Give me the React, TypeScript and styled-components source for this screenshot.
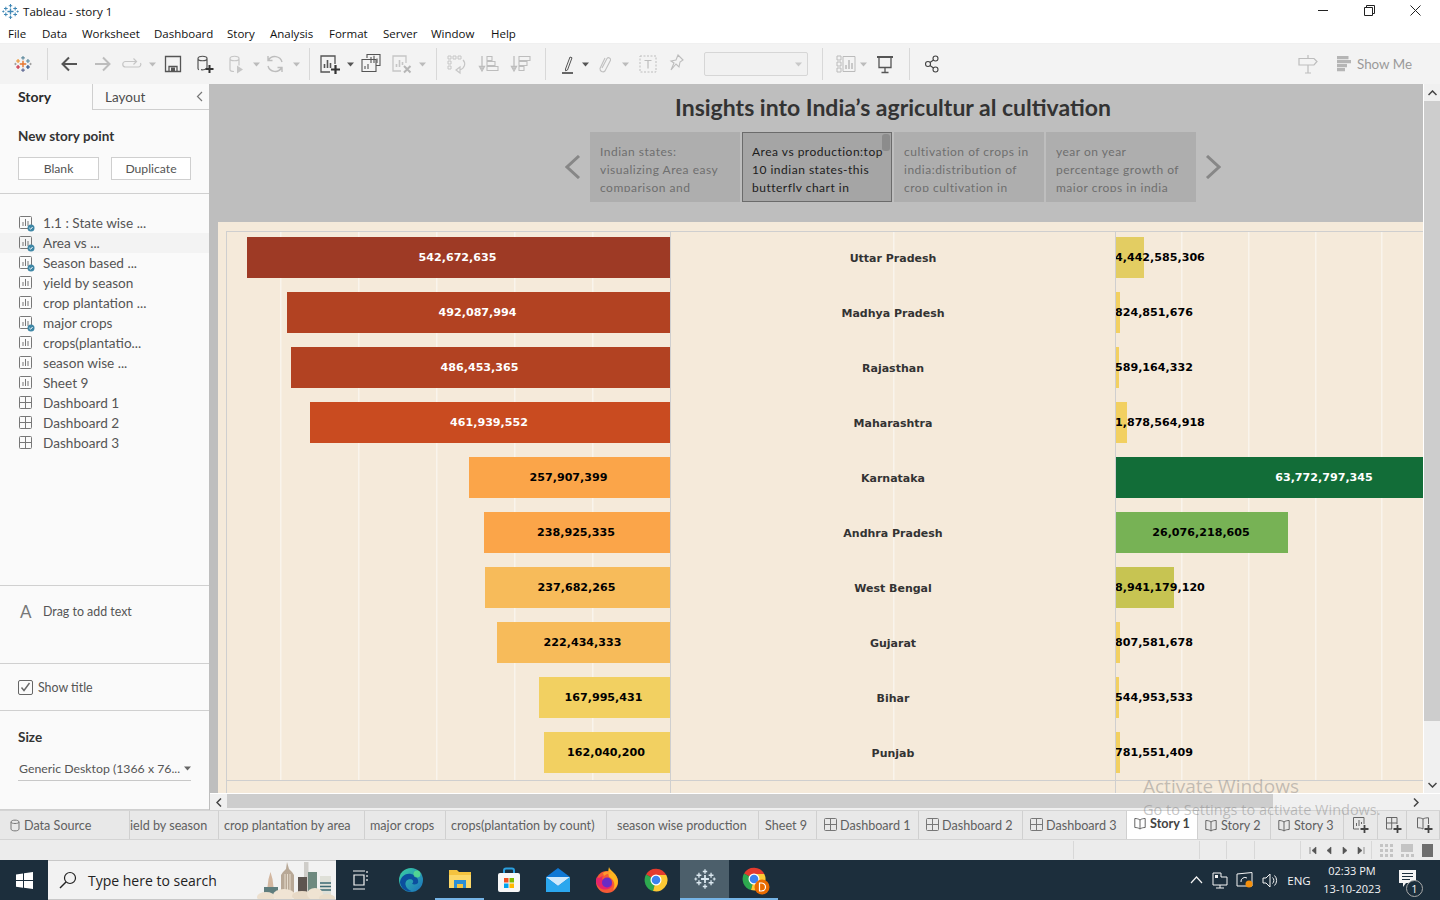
import React from "react";
import styled, { createGlobalStyle } from "styled-components";

const Global = createGlobalStyle`
  html, body { margin: 0; padding: 0; height: 100%; overflow: hidden; background: #fff; }
  #root { height: 900px; width: 1440px; }
  * { box-sizing: border-box; }
`;

const UI = `"Lato", "Open Sans", "Liberation Sans", sans-serif`;
const SEGOE = `"Open Sans", "Noto Sans", "Liberation Sans", sans-serif`;
const VIZ = `"DejaVu Sans", "Liberation Sans", sans-serif`;

const Shell = styled.div`
  position: relative;
  width: 1440px;
  height: 900px;
  display: flex;
  flex-direction: column;
  overflow: hidden;
  font-family: ${UI};
`;
const TitleBar = styled.div`
  height: 22px;
  display: flex;
  align-items: center;
  padding: 0 2px 0 2px;
  gap: 4px;
  background: #fff;
  font: 11.6px ${SEGOE};
  color: #111;
`;
const TitleText = styled.span`
  flex: 1;
`;
const WinBtns = styled.div`
  display: flex;
  gap: 0;
  align-self: flex-start;
`;
const WinBtn = styled.div`
  width: 46px;
  height: 20px;
  display: flex;
  align-items: center;
  justify-content: center;
`;
const MenuBar = styled.div`
  height: 21px;
  display: flex;
  align-items: center;
  padding: 1px 0 0 8px;
  background: #fff;
  font: 11.5px ${SEGOE};
  color: #111;
`;
const MenuItem = styled.span<{ $w: number }>`
  width: ${(p) => p.$w}px;
`;
const Toolbar = styled.div`
  height: 41px;
  display: flex;
  align-items: center;
  background: #f3f3f3;
  border-top: 1px solid #f0f0f0;
`;
const ToolSlot = styled.div<{ $ml: number; $w: number }>`
  margin-left: ${(p) => p.$ml}px;
  width: ${(p) => p.$w}px;
  height: 22px;
  flex: none;
  display: flex;
  align-items: center;
  justify-content: center;
`;
const ToolSep = styled.div<{ $ml: number }>`
  margin-left: ${(p) => p.$ml}px;
  width: 1px;
  height: 32px;
  flex: none;
  background: #d8d8d8;
`;
const Combo = styled.div<{ $ml: number }>`
  margin-left: ${(p) => p.$ml}px;
  width: 104px;
  height: 24px;
  flex: none;
  border: 1px solid #d6d6d6;
  border-radius: 2px;
  background: #f1f1f1;
  display: flex;
  align-items: center;
  justify-content: flex-end;
  padding-right: 5px;
`;
const ShowMe = styled.span<{ $ml: number }>`
  margin-left: ${(p) => p.$ml}px;
  font: 13.4px ${UI};
  color: #9a9a9a;
  flex: none;
`;
const Body = styled.div`
  height: 726px;
  display: flex;
`;
const Side = styled.aside`
  width: 210px;
  flex: none;
  display: flex;
  flex-direction: column;
  background: #fafafa;
  border-right: 1px solid #bebebe;
  color: #4d4d4d;
  font-size: 13px;
`;
const SideTabs = styled.div`
  height: 26px;
  flex: none;
  display: flex;
`;
const SideTab = styled.div<{ $on?: boolean; $w: number }>`
  width: ${(p) => p.$w}px;
  padding-left: ${(p) => (p.$on ? 18 : 12)}px;
  padding-bottom: ${(p) => (p.$on ? 2 : 0)}px;
  display: flex;
  align-items: center;
  justify-content: space-between;
  padding-right: 6px;
  font: ${(p) => (p.$on ? 700 : 400)} ${(p) => (p.$on ? 14 : 13.5)}px ${UI};
  color: ${(p) => (p.$on ? "#2b2b2b" : "#4d4d4d")};
  border-bottom: ${(p) => (p.$on ? "none" : "1px solid #cfcfcf")};
  border-left: ${(p) => (p.$on ? "none" : "1px solid #cfcfcf")};
  background: ${(p) => (p.$on ? "#fafafa" : "#f9f9f9")};
`;
const SideSection = styled.section<{ $h: number }>`
  height: ${(p) => p.$h}px;
  flex: none;
  border-bottom: 1px solid #d0d0d0;
`;
const NewPoint = styled(SideSection)`
  padding: 18px 18px 0;
`;
const SideHeading = styled.div`
  font: 700 13.5px ${UI};
  color: #333;
  line-height: 16px;
`;
const SideButtons = styled.div`
  display: flex;
  gap: 12px;
  margin-top: 13px;
`;
const SideButton = styled.div<{ $w: number }>`
  width: ${(p) => p.$w}px;
  height: 23px;
  padding-bottom: 1px;
  border: 1px solid #cfcfcf;
  background: #fff;
  display: flex;
  align-items: center;
  justify-content: center;
  font: 12.2px ${UI};
  color: #555;
`;
const SheetList = styled(SideSection)`
  padding-top: 19px;
`;
const SheetRow = styled.div<{ $on?: boolean }>`
  height: 20px;
  display: flex;
  align-items: center;
  gap: 10px;
  padding-left: 19px;
  background: ${(p) => (p.$on ? "#f3f3f3" : "transparent")};
  font: 13.6px ${UI};
  color: #555;
  white-space: nowrap;
`;
const DragRow = styled(SideSection)`
  display: flex;
  align-items: flex-start;
  padding: 17px 0 0 20px;
  font: 12.4px ${UI};
  color: #555;
`;
const DragGlyph = styled.span`
  width: 23px;
  font: 17px ${UI};
  line-height: 18px;
  color: #777;
`;
const DragText = styled.span`
  line-height: 18px;
`;
const ShowTitle = styled(SideSection)`
  display: flex;
  align-items: center;
  gap: 5px;
  padding-left: 18px;
  font: 12.4px ${UI};
  color: #555;
`;
const Check = styled.span`
  width: 15px;
  height: 15px;
  border: 1px solid #666;
  border-radius: 2px;
  display: flex;
  align-items: center;
  justify-content: center;
`;
const SizeBox = styled.section`
  flex: 1;
  padding: 18px 18px 0;
  border-bottom: 1px solid #d0d0d0;
`;
const SizeSelect = styled.div`
  margin-top: 14px;
  height: 22px;
  width: 173px;
  border-bottom: 1px solid #c8c8c8;
  display: flex;
  align-items: center;
  justify-content: space-between;
  padding: 0 0 3px 1px;
  font: 12.3px ${UI};
  color: #555;
  white-space: nowrap;
`;
const Main = styled.main`
  flex: 1;
  min-width: 0;
  display: flex;
  flex-direction: column;
`;
const ViewRow = styled.div`
  flex: 1;
  min-height: 0;
  display: flex;
`;
const Canvas = styled.div`
  width: 1213px;
  flex: none;
  overflow: hidden;
  background: #bebebe;
`;
const StoryPage = styled.div`
  width: 1366px;
  height: 100%;
  display: flex;
  flex-direction: column;
`;
const StoryTitle = styled.h1`
  margin: 0;
  height: 48px;
  padding-bottom: 2px;
  display: flex;
  align-items: center;
  justify-content: center;
  font: 700 23px ${UI};
  color: #333;
`;
const Nav = styled.div`
  height: 70px;
  display: flex;
  justify-content: center;
  align-items: center;
  gap: 2px;
`;
const NavArrow = styled.div<{ $right?: boolean }>`
  width: 23px;
  display: flex;
  justify-content: ${(p) => (p.$right ? "flex-end" : "flex-start")};
`;
const Caption = styled.div<{ $on?: boolean }>`
  position: relative;
  width: 150px;
  height: 70px;
  padding: ${(p) => (p.$on ? "10px 6px 0 9px" : "11px 6px 0 10px")};
  background: ${(p) => (p.$on ? "#a5a5a5" : "#aeaeae")};
  border: ${(p) => (p.$on ? "1px solid #6b6b6b" : "none")};
  color: ${(p) => (p.$on ? "#1c1c1c" : "#6e6e6e")};
  font: 12px/18px ${UI};
`;
const CaptionClip = styled.div`
  height: 49px;
  overflow: hidden;
  letter-spacing: 0.5px;
`;
const CaptionThumb = styled.span`
  position: absolute;
  right: 1px;
  top: 1px;
  width: 8px;
  height: 17px;
  border-radius: 3px;
  background: #8c8c8c;
`;
const Board = styled.div`
  flex: 1;
  min-height: 0;
  margin-top: 20px;
  margin-left: 8px;
  padding: 9px 0 0 8px;
  background: #f5eada;
  width: 1350px;
`;
const Plot = styled.div`
  height: 100%;
  display: grid;
  grid-template-columns: 444px 445px 1fr;
  border-top: 1px solid #cfcfcf;
  border-left: 1px solid #cfcfcf;
`;
const Pane = styled.div<{ $lines: string }>`
  display: flex;
  flex-direction: column;
  background: ${(p) => p.$lines};
  border-right: 1px solid #cfcfcf;
  min-width: 0;
`;
const Rows = styled.div`
  flex: 1;
  display: flex;
  flex-direction: column;
  gap: 14px;
  padding-top: 5px;
  overflow: hidden;
`;
const Foot = styled.div`
  height: 13px;
  flex: none;
  background: #f5eada;
  border-top: 1px solid #cfcfcf;
`;
const LeftRow = styled.div`
  height: 41px;
  flex: none;
  display: flex;
  justify-content: flex-end;
`;
const Bar = styled.div<{ $bg: string; $w: number; $ink: string }>`
  width: ${(p) => p.$w}px;
  flex: none;
  height: 41px;
  padding-right: 2px;
  background: ${(p) => p.$bg};
  color: ${(p) => p.$ink};
  display: flex;
  align-items: center;
  justify-content: center;
  font: 700 11.1px ${VIZ};
`;
const StateRow = styled.div`
  height: 41px;
  flex: none;
  display: flex;
  align-items: center;
  justify-content: center;
  padding-top: 2px;
  font: 700 11px ${VIZ};
  color: #333;
`;
const RightRow = styled.div`
  position: relative;
  height: 41px;
  flex: none;
  display: flex;
`;
const RightValue = styled.span`
  position: absolute;
  left: -1px;
  top: 0;
  height: 41px;
  display: flex;
  align-items: center;
  font: 700 11.1px ${VIZ};
  color: #000;
`;
const VScroll = styled.div`
  width: 17px;
  flex: none;
  background: #f0f0f0;
  display: flex;
  flex-direction: column;
  align-items: center;
  border-left: 1px solid #fff;
`;
const ScrollEnd = styled.div`
  height: 17px;
  flex: none;
  display: flex;
  align-items: center;
  justify-content: center;
`;
const VThumb = styled.div`
  width: 16px;
  height: 620px;
  background: #cdcdcd;
`;
const VTrack = styled.div`
  flex: 1;
`;
const HScroll = styled.div`
  height: 17px;
  flex: none;
  display: flex;
  background: #f0f0f0;
  border-top: 1px solid #fff;
`;
const HThumb = styled.div`
  width: 1046px;
  margin-bottom: 2px;
  background: #cdcdcd;
`;
const HTrack = styled.div`
  flex: 1;
`;
const HEnd = styled.div`
  width: 17px;
  display: flex;
  align-items: center;
  justify-content: center;
`;
const HCorner = styled.div`
  width: 16px;
  background: #f0f0f0;
`;
const Tabs = styled.div`
  height: 30px;
  display: flex;
  background: #e8e8e8;
  border-bottom: 1px solid #d4d4d4;
  border-top: 1px solid #d4d4d4;
  font: 12.6px ${UI};
  color: #606060;
`;
const Tab = styled.div<{ $w: number; $on?: boolean; $p: number }>`
  width: ${(p) => p.$w}px;
  flex: none;
  display: flex;
  align-items: center;
  gap: 4px;
  padding-left: ${(p) => p.$p}px;
  padding-bottom: ${(p) => (p.$on ? 3 : 0)}px;
  border-right: 1px solid #d0d0d0;
  background: ${(p) => (p.$on ? "#fff" : "transparent")};
  font-weight: ${(p) => (p.$on ? 700 : 400)};
  color: ${(p) => (p.$on ? "#444" : "#606060")};
  white-space: nowrap;
  overflow: hidden;
`;
const TabDash = styled.span`
  display: flex;
  margin-right: -2px;
`;
const Status = styled.div`
  height: 20px;
  display: flex;
  align-items: center;
  background: #ececec;
`;
const StatusCell = styled.div<{ $w: number }>`
  width: ${(p) => p.$w}px;
  height: 18px;
  flex: none;
  border-right: 1px solid #d8d8d8;
`;
const Pager = styled.div`
  display: flex;
  align-items: center;
  gap: 6px;
  padding-left: 7px;
  width: 71px;
  height: 18px;
  border-right: 1px solid #d8d8d8;
`;
const ViewIcons = styled.div`
  display: flex;
  align-items: center;
  gap: 7px;
  padding-left: 8px;
`;
const Taskbar = styled.div`
  height: 40px;
  display: flex;
  align-items: center;
  background: #1c2e3c;
  color: #f4f4f4;
`;
const StartBtn = styled.div`
  width: 48px;
  height: 40px;
  flex: none;
  display: flex;
  align-items: center;
  justify-content: center;
`;
const SearchBox = styled.div`
  position: relative;
  width: 288px;
  height: 40px;
  flex: none;
  background: #f2f2f2;
  border: 1px solid #c8c8c8;
  border-width: 1px 0 1px 0;
  display: flex;
  align-items: center;
  gap: 11px;
  padding-left: 11px;
  font: 14px ${SEGOE};
  color: #222;
`;
const Skyline = styled.div`
  position: absolute;
  right: 0;
  bottom: 0;
  display: flex;
`;
const TaskIcon = styled.div<{ $active?: boolean; $under?: boolean; $w?: number }>`
  position: relative;
  width: ${(p) => p.$w ?? 49}px;
  height: 40px;
  flex: none;
  display: flex;
  align-items: center;
  justify-content: center;
  background: ${(p) => (p.$active ? "#4c5f6b" : "transparent")};
  border-bottom: ${(p) => (p.$under ? "2px solid #75b4e6" : "none")};
`;
const TrayArea = styled.div`
  margin-left: auto;
  padding-right: 17px;
  display: flex;
  align-items: center;
  height: 40px;
`;
const TrayIcon = styled.div<{ $w: number }>`
  width: ${(p) => p.$w}px;
  display: flex;
  align-items: center;
  justify-content: center;
`;
const TrayLang = styled.span`
  width: 28px;
  text-align: center;
  font: 11.5px ${SEGOE};
`;
const Clock = styled.div`
  width: 78px;
  text-align: center;
  font: 11px/18px ${SEGOE};
`;
const Notify = styled.div`
  position: relative;
  width: 32px;
  margin-top: -4px;
  display: flex;
  align-items: center;
  justify-content: center;
`;
const NotifyBadge = styled.span`
  position: absolute;
  right: 0;
  bottom: -10px;
  width: 17px;
  height: 17px;
  border-radius: 50%;
  border: 1px solid #aaa;
  background: #1c2e3c;
  font: 11px/15px ${SEGOE};
  text-align: center;
`;
const Watermark = styled.div`
  position: absolute;
  left: 1143px;
  top: 774px;
  color: rgba(120, 120, 120, 0.42);
  font-family: ${SEGOE};
  pointer-events: none;
  white-space: nowrap;
`;
const WatermarkBig = styled.div`
  font-size: 19px;
  line-height: 25px;
`;
const WatermarkSmall = styled.div`
  font-size: 14.5px;
  line-height: 20px;
  margin-top: 1px;
`;

/* ---------- icons ---------- */
const S = (c: string, w = 1.3) => ({ fill: "none", stroke: c, strokeWidth: w });

const TableauMark = ({ size = 20, mono }: { size?: number; mono?: string }) => {
  const col = (c: string) => mono || c;
  const P = ({ x, y, r, c, w }: { x: number; y: number; r: number; c: string; w: number }) => (
    <path d={`M${x - r} ${y}H${x + r}M${x} ${y - r}V${y + r}`} stroke={col(c)} strokeWidth={w} fill="none" />
  );
  return (
    <svg width={size} height={size} viewBox="0 0 20 20">
      <P x={10} y={10} r={3.6} c="#e8762d" w={1.6} />
      <P x={10} y={3.2} r={2} c="#5b879b" w={1.2} />
      <P x={10} y={16.8} r={2} c="#5c6692" w={1.2} />
      <P x={4.5} y={6.6} r={2.2} c="#eb912b" w={1.2} />
      <P x={15.5} y={6.6} r={2.2} c="#59879b" w={1.2} />
      <P x={4.5} y={13.4} r={2.2} c="#c72037" w={1.2} />
      <P x={15.5} y={13.4} r={2.2} c="#1f447e" w={1.2} />
      <P x={1.6} y={10} r={1.3} c="#9a9a9a" w={1} />
      <P x={18.4} y={10} r={1.3} c="#9a9a9a" w={1} />
    </svg>
  );
};

const Caret = ({ c = "#bbb" }: { c?: string }) => (
  <svg width="7" height="5" viewBox="0 0 7 5"><path d="M0 0.5h7L3.5 4.5z" fill={c} /></svg>
);

const DARK = "#555";
const DIM = "#c6c6c6";
const Ic = ({ children }: { children: React.ReactNode }) => (
  <svg width="22" height="22" viewBox="0 0 22 22">{children}</svg>
);

const toolIcons: Record<string, React.ReactNode> = {
  logo: <TableauMark size={18} />,
  back: <Ic><path d="M18 11H4M10 4.5 3.5 11l6.5 6.5" {...S(DARK, 2)} /></Ic>,
  fwd: <Ic><path d="M4 11h14M12 4.5l6.500 6.500-6.500 6.500" {...S("#bdbdbd", 2)} /></Ic>,
  redo: <Ic><path d="M15 8.500H4.500a2.700 2.700 0 0 0 0 5.500H17a2.700 2.700 0 0 0 2.500-4M12.500 5.500l3 3-3 3" {...S("#c6c6c6", 1.2)} /></Ic>,
  save: <Ic><path d="M3.500 3.500h15v15h-15zM7 18.500v-5h8v5" {...S(DARK, 1.3)} /><rect x="9" y="14.500" width="4" height="4" fill={DARK} /></Ic>,
  newData: (
    <Ic>
      <path d="M4 5.500c0-3 9-3 9 0v9c0 2-4 2.500-6 2.200M4 5.500v10c0 .6.4 1 1 1.200M4 5.500c0 3 9 3 9 0" {...S(DARK, 1.2)} />
      <path d="M15.500 12v8M11.500 16h8" {...S("#333", 2)} />
    </Ic>
  ),
  pause: (
    <Ic>
      <path d="M5 5.500c0-3 9-3 9 0v7M5 5.500v11c0 1.400 2.400 2 4 2M5 5.500c0 3 9 3 9 0" {...S(DIM, 1.2)} />
      <path d="M12 12.500l6 4-6 4z" fill={DIM} />
    </Ic>
  ),
  refresh: <Ic><path d="M18 9a7.500 7.500 0 0 0-13.500-2M4 13a7.500 7.500 0 0 0 13.500 2M4 3v4.500h4.500M18 19v-4.500h-4.500" {...S("#bdbdbd", 1.4)} /></Ic>,
  newSheet: (
    <Ic>
      <path d="M16 11V3H2v16h9" {...S(DARK, 1.3)} />
      <path d="M5.500 15v-4M8.500 15V7M11.500 15v-5" {...S(DARK, 1.6)} />
      <path d="M16.500 12v9M12 16.500h9" {...S("#333", 2.2)} />
    </Ic>
  ),
  dup: (
    <Ic>
      <path d="M7 5V1.500h13v11h-4" {...S(DARK, 1.1)} />
      <path d="M2 6.500h14v12H2z" fill="#f3f3f3" stroke={DARK} strokeWidth="1.100" />
      <path d="M11 10V4M14 10V2.800M17 10V5.500M5 16v-3M8 16v-5" {...S(DARK, 1.1)} />
    </Ic>
  ),
  clear: (
    <Ic>
      <path d="M15 10V3H2v15h8" {...S(DIM, 1.3)} />
      <path d="M5.500 14v-3M8.500 14V7M11.500 12V9" {...S(DIM, 1.6)} />
      <path d="M13 13l6.500 6.500M19.500 13L13 19.500" {...S("#b6b6b6", 2)} />
    </Ic>
  ),
  swap: (
    <Ic>
      <path d="M2 3h3v3H2zM7 3h3v3H7zM12 3h3v3h-3zM2 8h3v3H2zM2 13h3v3H2z" {...S(DIM, 1)} />
      <path d="M17 7c3 3 2 8-3 10M10 17l4-3v6z" {...S(DIM, 1.2)} />
    </Ic>
  ),
  sortA: (
    <Ic>
      <path d="M4 3v13M1.500 13.500 4 18l2.500-4.500z" {...S("#bdbdbd", 1.3)} />
      <path d="M9 3.500h5v4H9zM9 8.500h8v4H9zM9 13.500h11v4H9z" {...S("#bdbdbd", 1.1)} />
    </Ic>
  ),
  sortD: (
    <Ic>
      <path d="M4 3v13M1.500 13.500 4 18l2.500-4.500z" {...S("#bdbdbd", 1.3)} />
      <path d="M9 3.500h11v4H9zM9 8.500h8v4H9zM9 13.500h5v4H9z" {...S("#bdbdbd", 1.1)} />
    </Ic>
  ),
  pen: (
    <Ic>
      <path d="M8.500 16 13 4l2 .8L10.500 17l-2 .8z" {...S(DARK, 1)} />
      <rect x="5" y="19" width="11" height="2" fill="#666" />
    </Ic>
  ),
  clip: <Ic><path d="M8 15 13 5.500a2 2 0 0 1 3.500 1.800L11 18a3 3 0 0 1-5-2.500L11 5" {...S("#c0c0c0", 1.1)} /></Ic>,
  textBox: (
    <Ic>
      <rect x="3" y="3" width="16" height="16" fill="none" stroke="#bdbdbd" strokeDasharray="2 1.500" />
      <path d="M7.500 7.500h7M11 7.500v8" {...S("#bdbdbd", 1.2)} />
    </Ic>
  ),
  pin: <Ic><path d="M12 2l5 5-3 2-1 5-3-3-5 6 3-7-3-2 5-1z" {...S("#bdbdbd", 1.1)} /></Ic>,
  showCards: (
    <Ic>
      <path d="M2 3h4v4H2zM2 9h4v4H2zM2 15h4v4H2z" {...S("#bbb", 1)} />
      <path d="M8 3.500h12v15H8z" {...S("#bbb", 1)} />
      <path d="M11 16v-4M14 16V7M17 16v-6" {...S("#bbb", 1.5)} />
    </Ic>
  ),
  present: (
    <Ic>
      <path d="M3 4h16" {...S("#555", 2)} />
      <path d="M5 5v9.500h12V5M11 14.500v4.500M7.500 19.500h7" {...S("#555", 1.3)} />
    </Ic>
  ),
  share: (
    <Ic>
      <circle cx="7" cy="11" r="2.500" {...S("#444", 1.1)} />
      <circle cx="14.500" cy="5.500" r="2.500" {...S("#444", 1.1)} />
      <circle cx="14.500" cy="16.500" r="2.500" {...S("#444", 1.1)} />
      <path d="M9 9.500l3.500-2.500M9 12.500l3.500 2.500" {...S("#444", 1.1)} />
    </Ic>
  ),
  sign: (
    <Ic>
      <path d="M2 5.500h15l3 3-3 3.500H2zM11 2v3.500M11 12v8M8 20h6" {...S("#bdbdbd", 1.2)} />
    </Ic>
  ),
  showMe: (
    <Ic>
      <path d="M4 3h11.500v3.300H4zM4 7h14v3.300H4zM4 11h10v3.300H4zM4 15h8v3.300H4z" fill="#b5b5b5" />
    </Ic>
  ),
};

type Tool = { k: string; c: number };
const tools: Tool[] = [
  { k: "logo", c: 23 }, { k: "|", c: 47 },
  { k: "back", c: 70 }, { k: "fwd", c: 102 }, { k: "redo", c: 132 }, { k: "^", c: 152 },
  { k: "save", c: 173 }, { k: "newData", c: 205 }, { k: "pause", c: 236 }, { k: "^", c: 256 },
  { k: "refresh", c: 275 }, { k: "^", c: 296 }, { k: "|", c: 309 },
  { k: "newSheet", c: 330 }, { k: "^d", c: 350 }, { k: "dup", c: 371 }, { k: "clear", c: 402 }, { k: "^", c: 422 },
  { k: "|", c: 436 }, { k: "swap", c: 457 }, { k: "sortA", c: 489 }, { k: "sortD", c: 521 },
  { k: "|", c: 545 }, { k: "pen", c: 568 }, { k: "^d", c: 585 }, { k: "clip", c: 605 }, { k: "^", c: 625 },
  { k: "textBox", c: 648 }, { k: "pin", c: 677 }, { k: "combo", c: 756 }, { k: "|", c: 822 },
  { k: "showCards", c: 846 }, { k: "^", c: 863 }, { k: "present", c: 885 }, { k: "|", c: 909 }, { k: "share", c: 932 },
  { k: "sign", c: 1308 }, { k: "showMe", c: 1344 }, { k: "showText", c: 1385 },
];

const widthOf = (k: string) =>
  k === "|" ? 1 : k[0] === "^" ? 7 : k === "combo" ? 104 : k === "showText" ? 56 : 22;

const ToolRow = () => {
  let right = 0;
  return (
    <Toolbar>
      {tools.map((t, i) => {
        const w = widthOf(t.k);
        const left = Math.round(t.c - w / 2);
        const ml = left - right;
        right = left + w;
        if (t.k === "|") return <ToolSep key={i} $ml={ml} />;
        if (t.k === "combo") return <Combo key={i} $ml={ml}><Caret c="#c8c8c8" /></Combo>;
        if (t.k === "showText") return <ShowMe key={i} $ml={ml}>Show Me</ShowMe>;
        return (
          <ToolSlot key={i} $ml={ml} $w={w}>
            {t.k === "^" ? <Caret /> : t.k === "^d" ? <Caret c="#555" /> : toolIcons[t.k]}
          </ToolSlot>
        );
      })}
    </Toolbar>
  );
};

const SheetIcon = ({ badge }: { badge?: boolean }) => (
  <svg width="14" height="16" viewBox="0 0 14 16" style={{ flex: "none", overflow: "visible" }}>
    <rect x="0.5" y="1.5" width="12" height="12" rx="1" fill="none" stroke="#777" />
    <path d="M4 11V7M6.500 11V4M9 11V6" stroke="#777" fill="none" />
    {badge && (
      <>
        <circle cx="12" cy="13" r="3.500" fill="#3f87a6" />
        <path d="M10.400 13l1.200 1.200 2-2.200" stroke="#fff" fill="none" />
      </>
    )}
  </svg>
);
const DashIcon = () => (
  <svg width="14" height="14" viewBox="0 0 14 14" style={{ flex: "none" }}>
    <rect x="0.5" y="0.5" width="12" height="12" rx="1" fill="none" stroke="#777" />
    <path d="M6.500 0.500v12M0.500 6.500h12" stroke="#777" fill="none" />
  </svg>
);
const BookIcon = () => (
  <svg width="12" height="13" viewBox="0 0 12 13" style={{ flex: "none" }}>
    <path d="M6 3C4.500 1.800 2.500 1.500.8 1.500v9c1.700 0 3.700.3 5.200 1.500 1.500-1.200 3.500-1.500 5.200-1.500v-9C9.500 1.500 7.500 1.800 6 3zM6 3v9" fill="none" stroke="#666" />
  </svg>
);
const Chevron = ({ right }: { right?: boolean }) => (
  <svg width="16" height="24" viewBox="0 0 16 24">
    <path d={right ? "M2 1l12 11L2 23" : "M14 1 2 12l12 11"} fill="none" stroke="#878787" strokeWidth="3" />
  </svg>
);

const sheets: { name: string; kind: "s" | "b" | "d"; on?: boolean }[] = [
  { name: "1.1 : State wise ...", kind: "b" },
  { name: "Area vs ...", kind: "b", on: true },
  { name: "Season based ...", kind: "b" },
  { name: "yield by season", kind: "s" },
  { name: "crop plantation ...", kind: "s" },
  { name: "major crops", kind: "b" },
  { name: "crops(plantatio...", kind: "s" },
  { name: "season wise ...", kind: "s" },
  { name: "Sheet 9", kind: "s" },
  { name: "Dashboard 1", kind: "d" },
  { name: "Dashboard 2", kind: "d" },
  { name: "Dashboard 3", kind: "d" },
];

const captions = [
  "Indian states: visualizing Area easy comparison and",
  "Area vs production:top 10 indian states-this butterfly chart in",
  "cultivation of crops in india:distribution of crop cultivation in",
  "year on year percentage growth of major crops in india",
];

const rows = [
  { state: "Uttar Pradesh", area: "542,672,635", aw: 423, ac: "#9e3a25", ai: "#fff", prod: "4,442,585,306", pw: 28, pc: "#e3cd62" },
  { state: "Madhya Pradesh", area: "492,087,994", aw: 383, ac: "#b24222", ai: "#fff", prod: "824,851,676", pw: 4, pc: "#f2d061" },
  { state: "Rajasthan", area: "486,453,365", aw: 379, ac: "#b24222", ai: "#fff", prod: "589,164,332", pw: 3, pc: "#f2d061" },
  { state: "Maharashtra", area: "461,939,552", aw: 360, ac: "#c94b20", ai: "#fff", prod: "1,878,564,918", pw: 11, pc: "#f2d061" },
  { state: "Karnataka", area: "257,907,399", aw: 201, ac: "#fba549", ai: "#000", prod: "63,772,797,345", pw: 418, pc: "#126d38", center: true },
  { state: "Andhra Pradesh", area: "238,925,335", aw: 186, ac: "#fba549", ai: "#000", prod: "26,076,218,605", pw: 172, pc: "#77b255", center: true },
  { state: "West Bengal", area: "237,682,265", aw: 185, ac: "#f7bb5a", ai: "#000", prod: "8,941,179,120", pw: 58, pc: "#c7c452" },
  { state: "Gujarat", area: "222,434,333", aw: 173, ac: "#f7bb5a", ai: "#000", prod: "807,581,678", pw: 4, pc: "#f2d061" },
  { state: "Bihar", area: "167,995,431", aw: 131, ac: "#f2d061", ai: "#000", prod: "544,953,533", pw: 3, pc: "#f2d061" },
  { state: "Punjab", area: "162,040,200", aw: 126, ac: "#f2d061", ai: "#000", prod: "781,551,409", pw: 4, pc: "#f2d061" },
];

const gridLines = (xs: number[]) =>
  xs.map((x) => `linear-gradient(#f9f4ec, #f9f4ec) ${x}px 0 / 1.5px 100% no-repeat`).join(", ") + ", #f5eada";

const tabs: { t: string; w: number; p: number; i?: string; on?: boolean }[] = [
  { t: "Data Source", w: 130, p: 10, i: "db" },
  { t: "ield by season", w: 89, p: 0 },
  { t: "crop plantation by area", w: 146, p: 5 },
  { t: "major crops", w: 81, p: 5 },
  { t: "crops(plantation by count)", w: 161, p: 5 },
  { t: "season wise production", w: 152, p: 10 },
  { t: "Sheet 9", w: 58, p: 6 },
  { t: "Dashboard 1", w: 102, p: 7, i: "d" },
  { t: "Dashboard 2", w: 104, p: 7, i: "d" },
  { t: "Dashboard 3", w: 104, p: 7, i: "d" },
  { t: "Story 1", w: 71, p: 7, i: "b", on: true },
  { t: "Story 2", w: 73, p: 7, i: "b" },
  { t: "Story 3", w: 73, p: 7, i: "b" },
];

const AddIcon = ({ kind }: { kind: string }) => (
  <svg width="18" height="18" viewBox="0 0 18 18">
    {kind === "s" && <path d="M12 8V1.500H1.500V13H7M4.500 10V7M7 10V4M9.500 8V6" fill="none" stroke="#666" />}
    {kind === "d" && <path d="M12 8V1.500H1.500V13H7M6.700 1.500V13M1.500 7h10.500" fill="none" stroke="#666" />}
    {kind === "b" && <path d="M7 13c-1.500-1-3.500-1.200-5.500-1.200v-10c2 0 4 .2 5.500 1.200 1.500-1 3.500-1.200 5.500-1.200V8M7 3v10" fill="none" stroke="#666" />}
    <path d="M12.500 9v8M8.500 13h8" stroke="#444" strokeWidth="1.800" fill="none" />
  </svg>
);

const Windows = () => (
  <svg width="17" height="17" viewBox="0 0 17 17"><path d="M0 2.400 7 1.400v6.700H0zM8 1.300 17 0v8.100H8zM0 9.100h7v6.600l-7-1zM8 9.100h9V17l-9-1.300z" fill="#fff" /></svg>
);

const Edge = () => (
  <svg width="26" height="26" viewBox="0 0 26 26">
    <defs>
      <linearGradient id="eg" x1="0" y1="0" x2="1" y2="1"><stop offset="0" stopColor="#3bd1a2" /><stop offset="1" stopColor="#1a6fbf" /></linearGradient>
    </defs>
    <circle cx="13" cy="13" r="12" fill="url(#eg)" />
    <path d="M2 15c1-6 6-9 11-8 5 1 8 5 7 9-1 1.500-4 2-6 .8 2-1.500 1.500-4-1-4.500-3.500-.6-6 2-5.500 5.500.5 3 3 5.500 6.500 6.500-6 .8-11-3-12-8.800z" fill="#0c4f9e" />
    <circle cx="19" cy="7" r="3.500" fill="#5be08c" opacity=".8" />
  </svg>
);
const Folder = () => (
  <svg width="24" height="22" viewBox="0 0 24 22">
    <path d="M1 2h8l2 2h12v16H1z" fill="#f4c33f" />
    <path d="M1 7h22v13H1z" fill="#fcd868" />
    <path d="M6 20v-8h12v8h-3v-4H9v4z" fill="#2d8fd5" />
    <path d="M9 16h6v4H9z" fill="#f4c33f" />
  </svg>
);
const Store = () => (
  <svg width="24" height="26" viewBox="0 0 24 26">
    <path d="M7 7V3.500a2 2 0 0 1 2-2h6a2 2 0 0 1 2 2V7" fill="none" stroke="#2aa0e0" strokeWidth="2" />
    <rect x="1" y="6" width="22" height="19" rx="2" fill="#f7f7f7" />
    <rect x="7" y="11" width="4.500" height="4.500" fill="#f25022" />
    <rect x="12.500" y="11" width="4.500" height="4.500" fill="#7fba00" />
    <rect x="7" y="16.500" width="4.500" height="4.500" fill="#00a4ef" />
    <rect x="12.500" y="16.500" width="4.500" height="4.500" fill="#ffb900" />
  </svg>
);
const Mail = () => (
  <svg width="24" height="26" viewBox="0 0 24 26">
    <path d="M0 10 12 1l12 9v15H0z" fill="#0f78d4" />
    <path d="M0 10h24L12 19z" fill="#cfe9fb" />
    <path d="M0 10l12 9 12-9v15H0z" fill="#2ba7ee" />
  </svg>
);
const Firefox = () => (
  <svg width="24" height="26" viewBox="0 0 24 26">
    <circle cx="12" cy="15" r="11" fill="#f65a35" />
    <path d="M14 0c1 4 8 6 9 14 0 4-2 7-5 9 3-5 1-11-4-13-1-3-1-7 0-10z" fill="#ffb51f" />
    <path d="M2 10c2 2 3 0 6-1-2 3 0 5 4 5 4 0 6 2 5 5-2 4-9 5-13 1C1 17 0 14 2 10z" fill="#e6246b" />
    <circle cx="12" cy="15.500" r="5" fill="#6a2bc5" />
    <path d="M8 6c3-2 7-2 9 1-3-1-6 0-8 2z" fill="#ff9a2e" />
  </svg>
);
const Chrome = ({ s = 24 }: { s?: number }) => (
  <svg width={s} height={s} viewBox="0 0 24 24">
    <path d="M12 12 2 6.500A11.500 11.500 0 0 1 22.300 7H12z" fill="#e33b2e" />
    <path d="M12 12 2 6.500A11.500 11.500 0 0 0 9 23.100z" fill="#2da94f" />
    <path d="M12 12l-3 11.100A11.500 11.500 0 0 0 22.300 7H12z" fill="#fcc934" />
    <circle cx="12" cy="12" r="5.500" fill="#fff" />
    <circle cx="12" cy="12" r="4.300" fill="#3b82f0" />
  </svg>
);
const SkylineArt = () => (
  <svg width="81" height="38" viewBox="0 2 81 38">
    <path d="M15.500 13l2 7 1 8h-6l1-8z" fill="#d3b7a0" />
    <rect x="9" y="28" width="14" height="9" fill="#5f7d7d" />
    <path d="M32 3l2 7 3 3 2 3v22H26V16l2-3 3-3z" fill="#b8a896" />
    <path d="M30 15v22M32.500 15v22M35 15v22" stroke="#e6dccd" strokeWidth="1" fill="none" />
    <rect x="49" y="3" width="4.500" height="32" fill="#cfcdc9" />
    <rect x="53" y="13" width="9" height="22" fill="#6f8a80" />
    <rect x="43" y="18" width="9" height="17" fill="#5e5550" />
    <rect x="65" y="17" width="11" height="20" fill="#dfe0d8" />
    <path d="M65 24h11M65 27.500h11M65 31h11" stroke="#3d6a73" strokeWidth="1.400" fill="none" />
    <ellipse cx="11" cy="38" rx="9" ry="5" fill="#ecdfcd" />
    <ellipse cx="29" cy="36" rx="11" ry="6" fill="#f0e4d4" />
    <ellipse cx="47" cy="37" rx="10" ry="5" fill="#e7d9c6" />
    <ellipse cx="60" cy="35" rx="8" ry="6" fill="#efe3d2" />
    <ellipse cx="72" cy="39" rx="8" ry="4" fill="#e9dcc9" />
  </svg>
);

export default function App() {
  return (
    <Shell>
      <Global />
      <TitleBar>
        <TableauMark size={17} mono="#3f87b5" />
        <TitleText>Tableau - story 1</TitleText>
        <WinBtns>
          <WinBtn>
            <svg width="10" height="10" viewBox="0 0 10 10"><path d="M0 5.500h10" stroke="#222" /></svg>
          </WinBtn>
          <WinBtn>
            <svg width="11" height="11" viewBox="0 0 11 11"><path d="M.5 2.500h8v8h-8zM2.500 2.500v-2h8v8h-2" fill="none" stroke="#222" /></svg>
          </WinBtn>
          <WinBtn>
            <svg width="11" height="11" viewBox="0 0 11 11"><path d="M.5.5l10 10M10.500.5l-10 10" stroke="#222" /></svg>
          </WinBtn>
        </WinBtns>
      </TitleBar>
      <MenuBar>
        {[["File", 34], ["Data", 40], ["Worksheet", 72], ["Dashboard", 73], ["Story", 43], ["Analysis", 59], ["Format", 54], ["Server", 48], ["Window", 60], ["Help", 40]].map(([t, w]) => (
          <MenuItem key={t as string} $w={w as number}>{t}</MenuItem>
        ))}
      </MenuBar>
      <ToolRow />
      <Body>
        <Side>
          <SideTabs>
            <SideTab $on $w={92}>Story</SideTab>
            <SideTab $w={117}>
              Layout
              <svg width="7" height="11" viewBox="0 0 7 11"><path d="M6 1 1.500 5.500 6 10" fill="none" stroke="#777" strokeWidth="1.200" /></svg>
            </SideTab>
          </SideTabs>
          <NewPoint $h={84}>
            <SideHeading>New story point</SideHeading>
            <SideButtons>
              <SideButton $w={81}>Blank</SideButton>
              <SideButton $w={80}>Duplicate</SideButton>
            </SideButtons>
          </NewPoint>
          <SheetList $h={392}>
            {sheets.map((s) => (
              <SheetRow key={s.name} $on={s.on}>
                {s.kind === "d" ? <DashIcon /> : <SheetIcon badge={s.kind === "b"} />}
                <span>{s.name}</span>
              </SheetRow>
            ))}
          </SheetList>
          <DragRow $h={78}>
            <DragGlyph>A</DragGlyph>
            <DragText>Drag to add text</DragText>
          </DragRow>
          <ShowTitle $h={47}>
            <Check>
              <svg width="11" height="10" viewBox="0 0 11 10"><path d="M1.500 5.500 4 8.500 9.500 1" fill="none" stroke="#666" strokeWidth="1.400" /></svg>
            </Check>
            Show title
          </ShowTitle>
          <SizeBox>
            <SideHeading>Size</SideHeading>
            <SizeSelect>
              Generic Desktop (1366 x 76...
              <Caret c="#666" />
            </SizeSelect>
          </SizeBox>
        </Side>
        <Main>
          <ViewRow>
            <Canvas>
              <StoryPage>
                <StoryTitle>Insights into India’s agricultur al cultivation</StoryTitle>
                <Nav>
                  <NavArrow><Chevron /></NavArrow>
                  {captions.map((c, i) => (
                    <Caption key={c} $on={i === 1}>
                      <CaptionClip>{c}</CaptionClip>
                      {i === 1 && <CaptionThumb />}
                    </Caption>
                  ))}
                  <NavArrow $right><Chevron right /></NavArrow>
                </Nav>
                <Board>
                  <Plot>
                    <Pane $lines={gridLines([53, 131, 209, 287, 365])}>
                      <Rows>
                        {rows.map((r) => (
                          <LeftRow key={r.state}>
                            <Bar $bg={r.ac} $w={r.aw} $ink={r.ai}>{r.area}</Bar>
                          </LeftRow>
                        ))}
                      </Rows>
                      <Foot />
                    </Pane>
                    <Pane $lines={gridLines([222])}>
                      <Rows>
                        {rows.map((r) => (
                          <StateRow key={r.state}>{r.state}</StateRow>
                        ))}
                      </Rows>
                      <Foot />
                    </Pane>
                    <Pane $lines={gridLines([65, 132, 199, 265, 332, 398])}>
                      <Rows>
                        {rows.map((r) => (
                          <RightRow key={r.state}>
                            {r.center ? (
                              <Bar $bg={r.pc} $w={r.pw} $ink={r.pc === "#126d38" ? "#fff" : "#000"}>{r.prod}</Bar>
                            ) : (
                              <>
                                <Bar $bg={r.pc} $w={r.pw} $ink="#000" />
                                <RightValue>{r.prod}</RightValue>
                              </>
                            )}
                          </RightRow>
                        ))}
                      </Rows>
                      <Foot />
                    </Pane>
                  </Plot>
                </Board>
              </StoryPage>
            </Canvas>
            <VScroll>
              <ScrollEnd>
                <svg width="9" height="6" viewBox="0 0 9 6"><path d="M.5 5 4.500 1l4 4" fill="none" stroke="#444" strokeWidth="1.500" /></svg>
              </ScrollEnd>
              <VThumb />
              <VTrack />
              <ScrollEnd>
                <svg width="9" height="6" viewBox="0 0 9 6"><path d="M.5 1l4 4 4-4" fill="none" stroke="#444" strokeWidth="1.500" /></svg>
              </ScrollEnd>
            </VScroll>
          </ViewRow>
          <HScroll>
            <HEnd>
              <svg width="6" height="9" viewBox="0 0 6 9"><path d="M5 .5 1 4.500l4 4" fill="none" stroke="#444" strokeWidth="1.500" /></svg>
            </HEnd>
            <HThumb />
            <HTrack />
            <HEnd>
              <svg width="6" height="9" viewBox="0 0 6 9"><path d="M1 .5l4 4-4 4" fill="none" stroke="#444" strokeWidth="1.500" /></svg>
            </HEnd>
            <HCorner />
          </HScroll>
        </Main>
      </Body>
      <Tabs>
        {tabs.map((t) => (
          <Tab key={t.t} $w={t.w} $on={t.on} $p={t.p}>
            {t.i === "db" && (
              <svg width="10" height="13" viewBox="0 0 10 13"><path d="M1 3c0-2.500 8-2.500 8 0v7c0 2.500-8 2.500-8 0zM1 3c0 2 8 2 8 0" fill="none" stroke="#777" /></svg>
            )}
            {t.i === "d" && <TabDash><DashIcon /></TabDash>}
            {t.i === "b" && <BookIcon />}
            {t.t}
          </Tab>
        ))}
        <Tab $w={34} $p={8}><AddIcon kind="s" /></Tab>
        <Tab $w={29} $p={7}><AddIcon kind="d" /></Tab>
        <Tab $w={33} $p={9}><AddIcon kind="b" /></Tab>
      </Tabs>
      <Status>
        <StatusCell $w={1074} />
        <StatusCell $w={126} />
        <StatusCell $w={27} />
        <StatusCell $w={28} />
        <StatusCell $w={46} />
        <Pager>
          {["M1 1v7M7 1 3 4.500 7 8z", "M6 1 2 4.500 6 8z", "M2 1l4 3.500L2 8z", "M1 1l4 3.500L1 8zM7 1v7"].map((d) => (
            <svg key={d} width="10" height="9" viewBox="0 0 8 9"><path d={d} fill="#555" stroke="#555" strokeWidth=".6" /></svg>
          ))}
        </Pager>
        <ViewIcons>
          <svg width="13" height="13" viewBox="0 0 13 13"><path d="M0 0h3v3H0zM5 0h3v3H5zM10 0h3v3h-3zM0 5h3v3H0zM5 5h3v3H5zM10 5h3v3h-3zM0 10h3v3H0zM5 10h3v3H5zM10 10h3v3h-3z" fill="#c4c4c4" /></svg>
          <svg width="14" height="13" viewBox="0 0 14 13"><path d="M1 0h12v8H1z" fill="#c4c4c4" /><path d="M1 10h3v3H1zM6 10h3v3H6zM11 10h3v3h-3z" fill="#c4c4c4" /></svg>
          <svg width="13" height="13" viewBox="0 0 13 13"><path d="M1 0h11v13H1z" fill="#6e6e6e" /></svg>
        </ViewIcons>
      </Status>
      <Taskbar>
        <StartBtn><Windows /></StartBtn>
        <SearchBox>
          <svg width="18" height="18" viewBox="0 0 18 18"><circle cx="11" cy="7" r="5.500" fill="none" stroke="#222" strokeWidth="1.200" /><path d="M7 11l-6 6" stroke="#222" strokeWidth="1.500" /></svg>
          Type here to search
          <Skyline><SkylineArt /></Skyline>
        </SearchBox>
        <TaskIcon $w={50}>
          <svg width="16" height="20" viewBox="0 0 16 20"><path d="M0 1h12M0 19h12M1 5h10v10H1zM14 1v2M14 5v2M14 9v2" fill="none" stroke="#f4f4f4" strokeWidth="1.200" /></svg>
        </TaskIcon>
        <TaskIcon><Edge /></TaskIcon>
        <TaskIcon $under><Folder /></TaskIcon>
        <TaskIcon><Store /></TaskIcon>
        <TaskIcon><Mail /></TaskIcon>
        <TaskIcon><Firefox /></TaskIcon>
        <TaskIcon><Chrome /></TaskIcon>
        <TaskIcon $active $under><TableauMark size={22} mono="#dbe8f0" /></TaskIcon>
        <TaskIcon $under>
          <Chrome />
          <svg width="16" height="16" viewBox="0 0 16 16" style={{ position: "absolute", left: 25, top: 19 }}><circle cx="8" cy="8" r="7.500" fill="#e96b00" /><path d="M5.500 4v8h2a4 4 0 0 0 0-8z" fill="none" stroke="#fff" strokeWidth="1.200" /></svg>
        </TaskIcon>
        <TrayArea>
          <TrayIcon $w={22}>
            <svg width="13" height="8" viewBox="0 0 13 8"><path d="M1 7l5.500-6L12 7" fill="none" stroke="#f4f4f4" strokeWidth="1.200" /></svg>
          </TrayIcon>
          <TrayIcon $w={28}>
            <svg width="18" height="18" viewBox="0 0 18 18"><path d="M1 2h8v4h6v8H1zM8 14v3M4 17h8" fill="none" stroke="#f4f4f4" /><path d="M3 4h3v3H3z" fill="#f4f4f4" /></svg>
          </TrayIcon>
          <TrayIcon $w={20}>
            <svg width="18" height="18" viewBox="0 0 18 18"><path d="M1 3l15-1.500V15H1zM5 11a4 4 0 0 1 6-4" fill="none" stroke="#f4f4f4" /><circle cx="13" cy="13" r="3.500" fill="#f5900c" /></svg>
          </TrayIcon>
          <TrayIcon $w={30}>
            <svg width="17" height="15" viewBox="0 0 17 15"><path d="M1 5h3l4-4v13l-4-4H1zM10.500 4.500a4 4 0 0 1 0 6M12.500 2.500a7 7 0 0 1 0 10" fill="none" stroke="#f4f4f4" /></svg>
          </TrayIcon>
          <TrayLang>ENG</TrayLang>
          <Clock>02:33 PM<br />13-10-2023</Clock>
          <Notify>
            <svg width="17" height="17" viewBox="0 0 17 17"><path d="M0 0h17v13H7l-3 4v-4H0z" fill="#f4f4f4" /><path d="M3 3.500h11M3 6.500h11M3 9.500h8" stroke="#1c2e3c" /></svg>
            <NotifyBadge>1</NotifyBadge>
          </Notify>
        </TrayArea>
      </Taskbar>
      <Watermark>
        <WatermarkBig>Activate Windows</WatermarkBig>
        <WatermarkSmall>Go to Settings to activate Windows.</WatermarkSmall>
      </Watermark>
    </Shell>
  );
}
